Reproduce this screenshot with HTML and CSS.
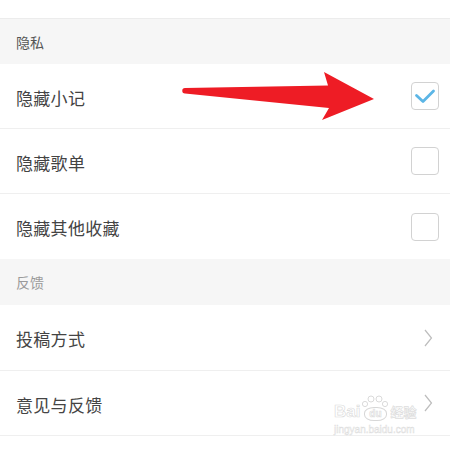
FILE: index.html
```html
<!DOCTYPE html>
<html lang="zh">
<head>
<meta charset="utf-8">
<link rel="stylesheet" href="styles.css">
</head>
<body>
<div class="page">
  <div class="top-gap"></div>
  <div class="section-header dark">隐私</div>
  <div class="row">
    <span class="label">隐藏小记</span>
    <span class="checkbox">
      <svg width="22" height="16" viewBox="0 0 22 16"><path d="M2.5 7.5 L9 13.5 L19.5 3" fill="none" stroke="#5cb6e6" stroke-width="2.8" stroke-linecap="round" stroke-linejoin="round"/></svg>
    </span>
  </div>
  <div class="row">
    <span class="label">隐藏歌单</span>
    <span class="checkbox"></span>
  </div>
  <div class="row last">
    <span class="label">隐藏其他收藏</span>
    <span class="checkbox"></span>
  </div>
  <div class="section-header light">反馈</div>
  <div class="row tall">
    <span class="label">投稿方式</span>
    <svg class="chevron" width="9" height="18" viewBox="0 0 9 18"><path d="M1 1 L7.5 9 L1 17" fill="none" stroke="#bdbdbd" stroke-width="1.2"/></svg>
  </div>
  <div class="row">
    <span class="label">意见与反馈</span>
    <svg class="chevron" width="9" height="18" viewBox="0 0 9 18"><path d="M1 1 L7.5 9 L1 17" fill="none" stroke="#bdbdbd" stroke-width="1.2"/></svg>
  </div>

  <svg class="arrow" width="450" height="450" viewBox="0 0 450 450">
    <path d="M185 88 L328 85.5 L324 72 L374 99 L322 120 L329 108 L185 93.5 A2.75 2.75 0 0 1 185 88 Z" fill="#ee1c25"/>
  </svg>

  <div class="watermark">
    <div class="wm-top">
      <span>Bai</span>
      <span class="paw">
        <svg class="toes" width="30" height="12" viewBox="0 0 30 12">
          <circle cx="5" cy="9" r="2.6" fill="none" stroke="#d6d6d6" stroke-width="0.9"/>
          <circle cx="11" cy="4" r="3" fill="none" stroke="#d6d6d6" stroke-width="0.9"/>
          <circle cx="19" cy="4" r="3" fill="none" stroke="#d6d6d6" stroke-width="0.9"/>
          <circle cx="25" cy="9" r="2.6" fill="none" stroke="#d6d6d6" stroke-width="0.9"/>
        </svg>
        <span class="paw-body">du</span>
      </span>
      <span class="cn">经验</span>
    </div>
    <div class="wm-bottom">jingyan.baidu.com</div>
  </div>
</div>
</body>
</html>
```
FILE: styles.css
```css
html, body {
  margin: 0;
  padding: 0;
  background: #ffffff;
}
body {
  font-family: "Noto Sans CJK SC", "Noto Sans", sans-serif;
}
.page {
  position: relative;
  width: 450px;
  height: 450px;
  overflow: hidden;
  background: #fff;
}
.top-gap {
  height: 18px;
  border-bottom: 1px solid #ececec;
}
.section-header {
  height: 45px;
  background: #f6f6f6;
  display: flex;
  align-items: center;
  padding-left: 16px;
  font-size: 14px;
}
.section-header.dark { color: #555; }
.section-header.light { color: #9a9a9a; height: 46px; }
.row {
  height: 64px;
  border-bottom: 1px solid #efefef;
  display: flex;
  align-items: center;
  justify-content: space-between;
  padding: 0 11px 0 16px;
}
.row.last {
  border-bottom: none;
  height: 65px;
}
.row.tall {
  height: 65px;
}
.label {
  font-size: 17px;
  color: #444;
  letter-spacing: 0.3px;
  padding-top: 2px;
}
.checkbox {
  width: 26px;
  height: 26px;
  border: 1.5px solid #d2d2d2;
  border-radius: 4px;
  display: flex;
  align-items: center;
  justify-content: center;
}
.chevron {
  margin-right: 6px;
}
.arrow {
  position: absolute;
  left: 0;
  top: 0;
  pointer-events: none;
}
.watermark {
  position: absolute;
  left: 334px;
  top: 396px;
  width: 90px;
  color: rgba(255,255,255,0.7);
  -webkit-text-stroke: 0.7px rgba(205,205,205,0.7);
  font-family: "Liberation Sans", sans-serif;
  pointer-events: none;
}
.wm-top {
  font-size: 17px;
  font-weight: bold;
  line-height: 18px;
  display: flex;
  align-items: flex-end;
  height: 25px;
}
.paw {
  display: flex;
  flex-direction: column;
  align-items: center;
  width: 30px;
}
.toes {
  display: block;
}
.paw-body {
  font-size: 10px;
  line-height: 11px;
  border: 1px solid rgba(205,205,205,0.8);
  border-radius: 45%;
  padding: 0 4px 1px;
}
.cn {
  font-family: "Noto Sans CJK SC", sans-serif;
  font-size: 13px;
}
.wm-bottom {
  margin-top: 3px;
  font-size: 10px;
  line-height: 11px;
  -webkit-text-stroke: 0.5px rgba(205,205,205,0.7);
}
```
